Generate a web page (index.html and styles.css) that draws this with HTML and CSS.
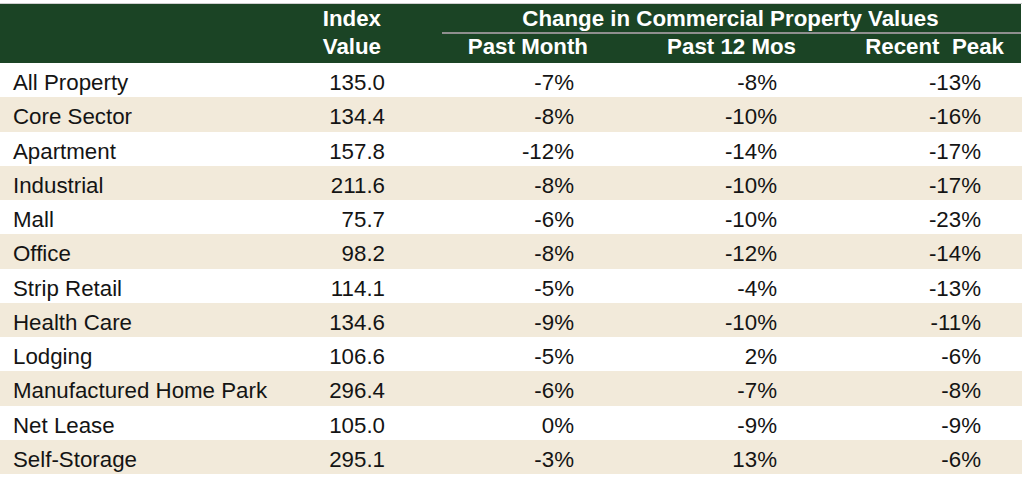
FILE: index.html
```html
<!DOCTYPE html>
<html>
<head>
<meta charset="utf-8">
<link rel="stylesheet" href="styles.css">
</head>
<body>
<div class="table">
  <div class="head">
    <div class="h1 c-label"></div>
    <div class="h1 c-index">Index</div>
    <div class="h1 c-span"><span class="span-title">Change in Commercial Property Values</span></div>
    <div class="h2 c-label"></div>
    <div class="h2 c-index">Value</div>
    <div class="h2 c-month">Past Month</div>
    <div class="h2 c-year">Past 12 Mos</div>
    <div class="h2 c-peak">Recent&nbsp; Peak</div>
  </div>
  <div class="body">
    <div class="row"><div class="label">All Property</div><div class="idx">135.0</div><div class="mon">-7%</div><div class="yr">-8%</div><div class="pk">-13%</div></div>
    <div class="row alt"><div class="label">Core Sector</div><div class="idx">134.4</div><div class="mon">-8%</div><div class="yr">-10%</div><div class="pk">-16%</div></div>
    <div class="row"><div class="label">Apartment</div><div class="idx">157.8</div><div class="mon">-12%</div><div class="yr">-14%</div><div class="pk">-17%</div></div>
    <div class="row alt"><div class="label">Industrial</div><div class="idx">211.6</div><div class="mon">-8%</div><div class="yr">-10%</div><div class="pk">-17%</div></div>
    <div class="row"><div class="label">Mall</div><div class="idx">75.7</div><div class="mon">-6%</div><div class="yr">-10%</div><div class="pk">-23%</div></div>
    <div class="row alt"><div class="label">Office</div><div class="idx">98.2</div><div class="mon">-8%</div><div class="yr">-12%</div><div class="pk">-14%</div></div>
    <div class="row"><div class="label">Strip Retail</div><div class="idx">114.1</div><div class="mon">-5%</div><div class="yr">-4%</div><div class="pk">-13%</div></div>
    <div class="row alt"><div class="label">Health Care</div><div class="idx">134.6</div><div class="mon">-9%</div><div class="yr">-10%</div><div class="pk">-11%</div></div>
    <div class="row"><div class="label">Lodging</div><div class="idx">106.6</div><div class="mon">-5%</div><div class="yr">2%</div><div class="pk">-6%</div></div>
    <div class="row alt"><div class="label">Manufactured Home Park</div><div class="idx">296.4</div><div class="mon">-6%</div><div class="yr">-7%</div><div class="pk">-8%</div></div>
    <div class="row"><div class="label">Net Lease</div><div class="idx">105.0</div><div class="mon">0%</div><div class="yr">-9%</div><div class="pk">-9%</div></div>
    <div class="row alt"><div class="label">Self-Storage</div><div class="idx">295.1</div><div class="mon">-3%</div><div class="yr">13%</div><div class="pk">-6%</div></div>
  </div>
</div>
</body>
</html>
```

FILE: styles.css
```css
html, body {
  margin: 0;
  padding: 0;
  background: #ffffff;
}
body {
  font-family: "Liberation Sans", Arial, sans-serif;
  font-size: 22.3px;
  color: #141414;
  padding-top: 3px;
}
.table {
  width: 1022px;
  border-top: 1px solid #cfcfcf;
}
.head {
  display: grid;
  grid-template-columns: 310px 80px 210px 200px 221px;
  background: #1b4425;
  color: #ffffff;
  font-weight: bold;
  width: 1021px;
}
.h1 {
  padding-top: 2px;
  height: 28px;
  line-height: 26px;
  box-sizing: border-box;
}
.h2 {
  height: 29px;
  line-height: 26px;
  box-sizing: border-box;
  white-space: nowrap;
}
.c-index {
  text-align: right;
  padding-right: 9px;
}
.c-span {
  grid-column: 3 / 6;
  margin-left: 52px;
  border-bottom: 2px solid #8f8f8f;
  height: 30px;
  text-align: center;
  white-space: nowrap;
}
.span-title {
  display: inline-block;
  margin-left: -2px;
}
.c-month {
  text-align: right;
  padding-right: 12px;
}
.c-year {
  text-align: right;
  padding-right: 4px;
}
.c-peak {
  text-align: right;
  padding-right: 17px;
}
.row {
  display: grid;
  grid-template-columns: 310px 80px 210px 200px 222px;
  height: 34.25px;
  box-sizing: border-box;
  padding-top: 6px;
  line-height: 28.25px;
}
.row.alt {
  background: #f2eada;
}
.label {
  padding-left: 13px;
  white-space: nowrap;
}
.idx {
  text-align: right;
  padding-right: 5px;
}
.mon {
  text-align: right;
  padding-right: 26px;
}
.yr {
  text-align: right;
  padding-right: 23px;
}
.pk {
  text-align: right;
  padding-right: 41px;
}
```
